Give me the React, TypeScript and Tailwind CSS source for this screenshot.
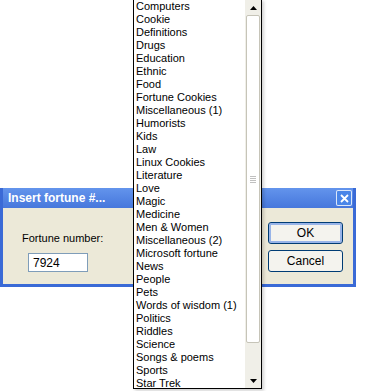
const categories = [
  "Computers",
  "Cookie",
  "Definitions",
  "Drugs",
  "Education",
  "Ethnic",
  "Food",
  "Fortune Cookies",
  "Miscellaneous (1)",
  "Humorists",
  "Kids",
  "Law",
  "Linux Cookies",
  "Literature",
  "Love",
  "Magic",
  "Medicine",
  "Men & Women",
  "Miscellaneous (2)",
  "Microsoft fortune",
  "News",
  "People",
  "Pets",
  "Words of wisdom (1)",
  "Politics",
  "Riddles",
  "Science",
  "Songs & poems",
  "Sports",
  "Star Trek",
];

function Arrow({ down }: { down?: boolean }) {
  return (
    <svg width="7" height="4" viewBox="0 0 7 4">
      {down ? <polygon points="0,0 7,0 3.5,4" fill="#000" /> : <polygon points="0,4 7,4 3.5,0" fill="#000" />}
    </svg>
  );
}

export default function App() {
  return (
    <div
      className="relative w-[368px] h-[391px] bg-white overflow-hidden text-[11px] text-black"
      style={{ fontFamily: '"Liberation Sans", Arial, sans-serif' }}
    >
      {/* dialog */}
      <div className="absolute left-0 top-[188px] w-[356px] h-[99px] flex flex-col bg-[#3a6ad6] p-[3px] pt-0">
        <div className="h-[20px] flex items-center justify-between pl-[5px] pr-[1px] bg-gradient-to-b from-[#6394ec] to-[#4677dc]">
          <span className="text-white font-bold text-[12px]">Insert fortune #...</span>
          <div className="w-[16px] h-[16px] border border-white/80 rounded-[2px] bg-[#4a86e8] flex items-center justify-center">
            <svg width="9" height="9" viewBox="0 0 9 9">
              <path d="M1 1 L8 8 M8 1 L1 8" stroke="#fff" strokeWidth="1.8" />
            </svg>
          </div>
        </div>
        <div className="flex-1 bg-[#ece9d8] flex justify-between">
          <div className="flex flex-col pl-[19px] pt-[24px]">
            <span className="text-[11px] leading-[13px]">Fortune number:</span>
            <div className="mt-[8px] ml-[6px] w-[60px] h-[19px] bg-white border border-[#7f9db9] flex items-center pl-[4px] text-[12px]">
              7924
            </div>
          </div>
          <div className="flex flex-col gap-[6px] pt-[14px] pr-[10px]">
            <button className="w-[75px] h-[22px] rounded-[3px] border border-[#003c74] bg-[#f4f3ee] shadow-[inset_0_0_0_2px_#98b4e8] text-[12px]">
              OK
            </button>
            <button className="w-[75px] h-[22px] rounded-[3px] border border-[#003c74] bg-[#f4f3ee] text-[12px]">
              Cancel
            </button>
          </div>
        </div>
      </div>

      {/* dropdown list */}
      <div className="absolute left-[133px] top-[-1px] w-[129px] h-[390px] border border-black bg-white flex shadow-[2px_2px_3px_rgba(0,0,0,0.18)]">
        <div className="flex-1 overflow-hidden">
          {categories.map((c) => (
            <div key={c} className="h-[13px] leading-[13px] pl-[2px] whitespace-nowrap">
              {c}
            </div>
          ))}
        </div>
        <div className="w-[16px] flex flex-col bg-[#f0efe8]">
          <div className="h-[15px] flex items-center justify-center">
            <Arrow />
          </div>
          <div className="h-[328px] mx-[1px] border border-[#c6c4b8] rounded-[2px] bg-white flex items-center justify-center">
            <div className="flex flex-col gap-[1px]">
              <div className="w-[6px] h-[1px] bg-[#c0c0c0]" />
              <div className="w-[6px] h-[1px] bg-[#c0c0c0]" />
              <div className="w-[6px] h-[1px] bg-[#c0c0c0]" />
              <div className="w-[6px] h-[1px] bg-[#c0c0c0]" />
            </div>
          </div>
          <div className="flex-1" />
          <div className="h-[14px] flex items-center justify-center">
            <Arrow down />
          </div>
        </div>
      </div>
    </div>
  );
}
